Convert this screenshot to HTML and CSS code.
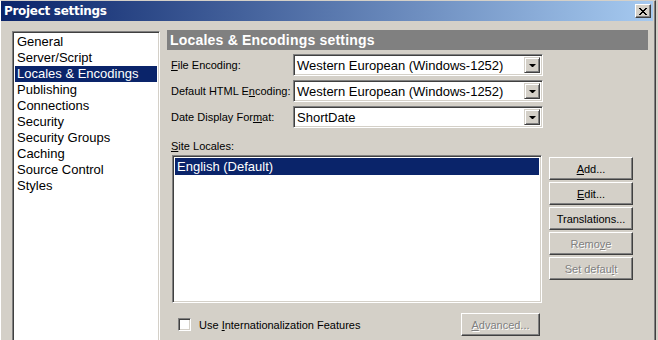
FILE: index.html
```html
<!DOCTYPE html>
<html lang="en">
<head>
    <meta charset="UTF-8">
    <title>Project settings</title>
    <link rel="stylesheet" href="styles.css">
</head>
<body>
    <div class="window">
        <div class="titlebar">
            <span class="title">Project settings</span>
            <button class="close-btn">
                <svg width="8" height="7" viewBox="0 0 8 7">
                    <path d="M0 0 L7 7 M1 0 L8 7 M7 0 L0 7 M8 0 L1 7" stroke="#000" stroke-width="1"/>
                </svg>
            </button>
        </div>
        <div class="content">
            <ul class="nav-list">
                <li>General</li>
                <li>Server/Script</li>
                <li class="selected">Locales &amp; Encodings</li>
                <li>Publishing</li>
                <li>Connections</li>
                <li>Security</li>
                <li>Security Groups</li>
                <li>Caching</li>
                <li>Source Control</li>
                <li>Styles</li>
            </ul>
            <div class="pane">
                <div class="pane-title">Locales &amp; Encodings settings</div>
                <div class="fields">
                    <label><u>F</u>ile Encoding:</label>
                    <div class="combo"><span>Western European (Windows-1252)</span><i class="arrow"></i></div>
                    <label>Default HTML E<u>n</u>coding:</label>
                    <div class="combo"><span>Western European (Windows-1252)</span><i class="arrow"></i></div>
                    <label>Date Display For<u>m</u>at:</label>
                    <div class="combo"><span>ShortDate</span><i class="arrow"></i></div>
                </div>
                <div class="locales-label"><u>S</u>ite Locales:</div>
                <div class="locales">
                    <ul class="locale-list">
                        <li class="selected">English (Default)</li>
                    </ul>
                    <div class="buttons">
                        <button class="btn"><u>A</u>dd...</button>
                        <button class="btn"><u>E</u>dit...</button>
                        <button class="btn">Translations...</button>
                        <button class="btn disabled">Remo<u>v</u>e</button>
                        <button class="btn disabled">Set defau<u>l</u>t</button>
                    </div>
                </div>
                <div class="bottom-row">
                    <label class="check"><i class="checkbox"></i><span>Use <u>I</u>nternationalization Features</span></label>
                    <button class="btn disabled advanced"><u>A</u>dvanced...</button>
                </div>
            </div>
        </div>
    </div>
</body>
</html>
```
FILE: styles.css
```css
body {
    margin: 0;
    width: 658px;
    height: 340px;
    overflow: hidden;
    background: #d4d0c8;
    font-family: "Liberation Sans", Arial, sans-serif;
    color: #000;
}

u {
    text-decoration: underline;
}

.window {
    width: 656px;
    height: 340px;
    border-top: 1px solid #d4d0c8;
    border-left: 1px solid #fff;
    border-right: 1px solid #404040;
    box-shadow: inset -1px 0 #808080;
    box-sizing: border-box;
}

.titlebar {
    display: flex;
    align-items: center;
    justify-content: space-between;
    height: 20px;
    margin-right: 2px;
    padding: 0 2px 0 3px;
    background: linear-gradient(to right, #0a246a, #a6caf0);
}

.title {
    color: #fff;
    font-weight: bold;
    font-size: 12px;
    font-family: "DejaVu Sans", sans-serif;
    letter-spacing: -0.3px;
}

.close-btn {
    width: 16px;
    height: 14px;
    padding: 0;
    display: flex;
    align-items: center;
    justify-content: center;
    background: #d4d0c8;
    border: 1px solid;
    border-color: #fff #404040 #404040 #fff;
    box-shadow: inset -1px -1px #808080;
}

.content {
    display: flex;
    align-items: flex-start;
    padding: 9px 0 0 11px;
}

.nav-list {
    list-style: none;
    margin: 1px 0 0 0;
    padding: 2px 2px;
    width: 148px;
    height: 320px;
    box-sizing: border-box;
    background: #fff;
    border: 1px solid;
    border-color: #808080 #fff #fff #808080;
    box-shadow: inset 1px 1px #404040, inset -1px -1px #d4d0c8;
    font-size: 13px;
}

.nav-list li {
    height: 16px;
    line-height: 16px;
    padding-left: 2px;
}

.nav-list li.selected,
.locale-list li.selected {
    background: #0a246a;
    color: #fff;
}

.pane {
    width: 481px;
    margin-left: 7px;
}

.pane-title {
    height: 20px;
    line-height: 20px;
    background: #808080;
    color: #fff;
    font-weight: bold;
    font-size: 14px;
    padding-left: 3px;
    letter-spacing: 0.2px;
}

.fields {
    display: grid;
    grid-template-columns: 122px 250px;
    grid-auto-rows: 22px;
    row-gap: 4px;
    padding: 4px 0 0 4px;
    font-size: 11px;
}

.fields label {
    line-height: 22px;
}

.combo {
    display: flex;
    align-items: center;
    justify-content: space-between;
    background: #fff;
    border: 1px solid;
    border-color: #808080 #fff #fff #808080;
    box-shadow: inset 1px 1px #404040, inset -1px -1px #d4d0c8;
    padding: 2px 2px 2px 3px;
    font-size: 13px;
    box-sizing: border-box;
}

.arrow {
    width: 16px;
    height: 16px;
    box-sizing: border-box;
    background: #d4d0c8;
    border: 1px solid;
    border-color: #d4d0c8 #404040 #404040 #d4d0c8;
    box-shadow: inset 1px 1px #fff, inset -1px -1px #808080;
    position: relative;
}

.arrow::after {
    content: "";
    position: absolute;
    left: 4px;
    top: 6px;
    border-left: 3px solid transparent;
    border-right: 3px solid transparent;
    border-top: 3px solid #000;
    width: 1px;
}

.locales-label {
    font-size: 11px;
    margin: 12px 0 0 4px;
    height: 15px;
    line-height: 13px;
}

.locales {
    display: flex;
    align-items: flex-start;
    margin-left: 5px;
}

.locale-list {
    list-style: none;
    margin: 0;
    padding: 2px;
    width: 370px;
    height: 148px;
    box-sizing: border-box;
    background: #fff;
    border: 1px solid;
    border-color: #808080 #fff #fff #808080;
    box-shadow: inset 1px 1px #404040, inset -1px -1px #d4d0c8;
    font-size: 13px;
}

.locale-list li {
    height: 17px;
    line-height: 17px;
    padding-left: 2px;
}

.buttons {
    display: flex;
    flex-direction: column;
    gap: 2px;
    margin: 2px 0 0 7px;
}

.btn {
    width: 84px;
    height: 23px;
    padding: 0;
    background: #d4d0c8;
    border: 1px solid;
    border-color: #fff #404040 #404040 #fff;
    box-shadow: inset -1px -1px #808080;
    font-family: "Liberation Sans", Arial, sans-serif;
    font-size: 11px;
    color: #000;
}

.btn.disabled {
    color: #808080;
    text-shadow: 1px 1px #fff;
}

.bottom-row {
    display: flex;
    align-items: center;
    justify-content: space-between;
    width: 373px;
    margin-top: 10px;
}

.check {
    display: flex;
    align-items: center;
    font-size: 11px;
    margin-left: 11px;
}

.checkbox {
    width: 13px;
    height: 13px;
    box-sizing: border-box;
    background: #fff;
    border: 1px solid;
    border-color: #808080 #fff #fff #808080;
    box-shadow: inset 1px 1px #404040, inset -1px -1px #d4d0c8;
    margin-right: 8px;
}

.btn.advanced {
    width: 79px;
}
```
